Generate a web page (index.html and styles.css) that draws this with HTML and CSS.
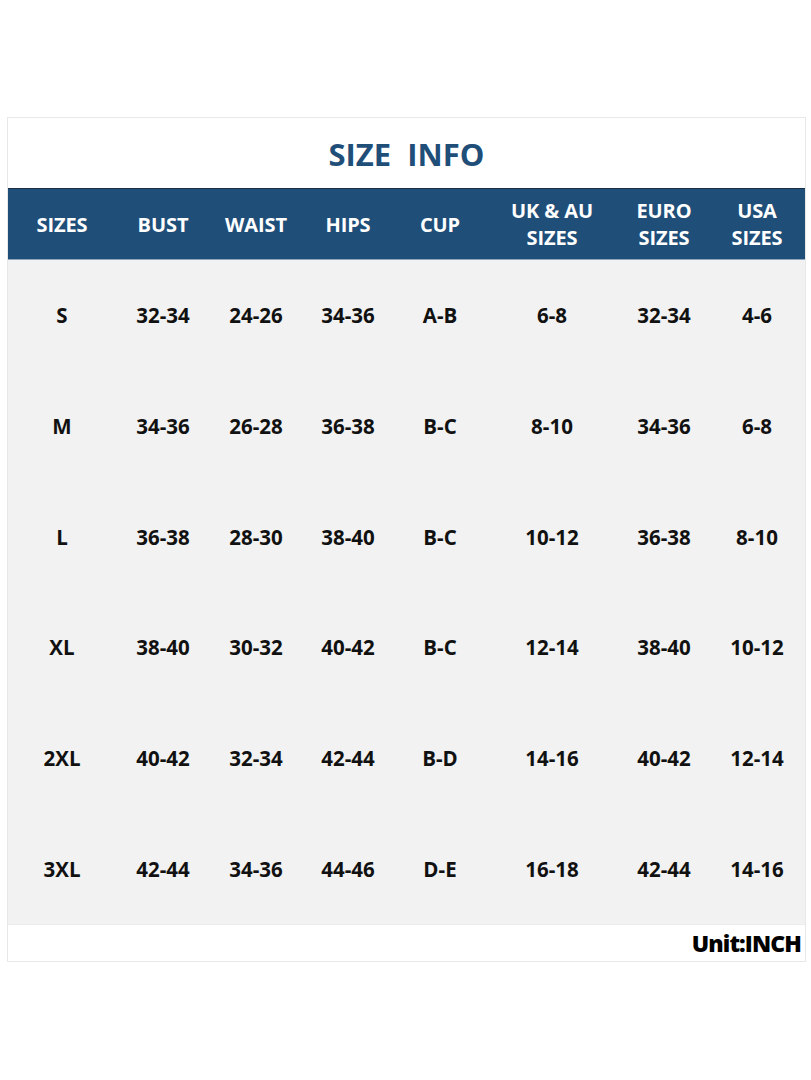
FILE: index.html
```html
<!DOCTYPE html>
<html>
<head>
<meta charset="utf-8">
<link rel="stylesheet" href="styles.css">
</head>
<body>
<div class="sheet">
  <div class="title">SIZE&nbsp;&nbsp;INFO</div>
  <div class="grid head">
    <div>SIZES</div><div>BUST</div><div>WAIST</div><div>HIPS</div><div>CUP</div><div>UK &amp; AU<br>SIZES</div><div>EURO<br>SIZES</div><div>USA<br>SIZES</div>
  </div>
  <div class="body">
    <div class="grid row"><div>S</div><div>32-34</div><div>24-26</div><div>34-36</div><div>A-B</div><div>6-8</div><div>32-34</div><div>4-6</div></div>
    <div class="grid row"><div>M</div><div>34-36</div><div>26-28</div><div>36-38</div><div>B-C</div><div>8-10</div><div>34-36</div><div>6-8</div></div>
    <div class="grid row"><div>L</div><div>36-38</div><div>28-30</div><div>38-40</div><div>B-C</div><div>10-12</div><div>36-38</div><div>8-10</div></div>
    <div class="grid row"><div>XL</div><div>38-40</div><div>30-32</div><div>40-42</div><div>B-C</div><div>12-14</div><div>38-40</div><div>10-12</div></div>
    <div class="grid row"><div>2XL</div><div>40-42</div><div>32-34</div><div>42-44</div><div>B-D</div><div>14-16</div><div>40-42</div><div>12-14</div></div>
    <div class="grid row"><div>3XL</div><div>42-44</div><div>34-36</div><div>44-46</div><div>D-E</div><div>16-18</div><div>42-44</div><div>14-16</div></div>
  </div>
  <div class="foot">Unit:INCH</div>
</div>
</body>
</html>
```
FILE: styles.css
```css
html, body {
  margin: 0;
  padding: 0;
  background: #ffffff;
}
body {
  font-family: "Open Sans", "DejaVu Sans", sans-serif;
  font-weight: 700;
}
.sheet {
  margin: 117px 0 0 7px;
  width: 797px;
  border: 1px solid #e8e8e8;
  background: #ffffff;
}
.title {
  height: 70px;
  display: flex;
  align-items: center;
  justify-content: center;
  color: #1f4e79;
  font-size: 31px;
  padding-top: 2px;
  box-sizing: border-box;
}
.grid {
  display: grid;
  grid-template-columns: 108px 94px 92px 92px 92px 132px 92px 94px;
}
.grid > div {
  display: flex;
  align-items: center;
  justify-content: center;
  text-align: center;
}
.head {
  height: 72px;
  background: #1f4e79;
  color: #ffffff;
  font-size: 20px;
  line-height: 27px;
  letter-spacing: -0.1px;
  border-top: 1px solid #1a2f45;
  border-bottom: 1px solid #8fa6bf;
  box-sizing: border-box;
}
.body {
  background: #f2f2f2;
}
.row {
  height: 110.67px;
  color: #111111;
  font-size: 20.5px;
}
.foot {
  height: 36px;
  display: flex;
  align-items: center;
  justify-content: flex-end;
  padding-right: 4px;
  font-size: 23px;
  font-weight: 800;
  color: #000000;
  border-top: 1px solid #ececec;
  letter-spacing: -0.9px;
}
```
